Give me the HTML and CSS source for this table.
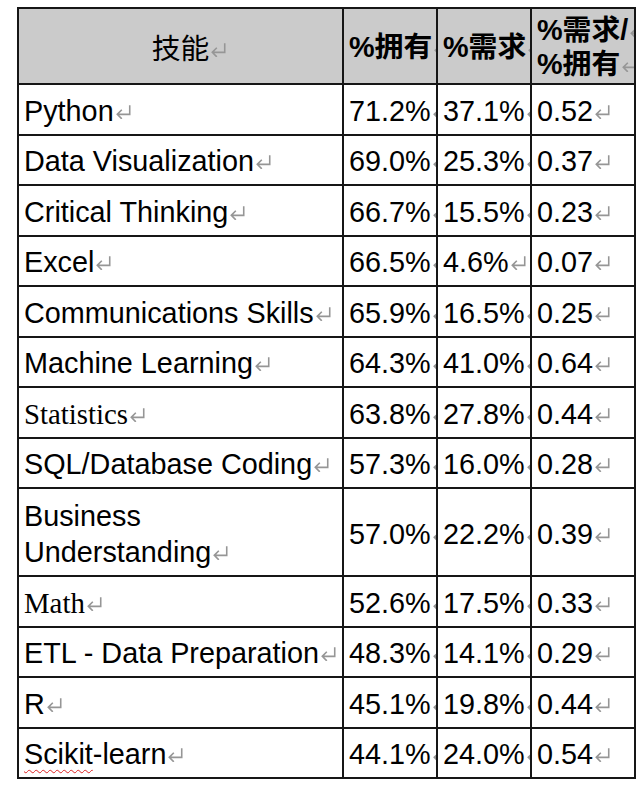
FILE: index.html
```html
<!DOCTYPE html>
<html lang="zh">
<head>
<meta charset="utf-8">
<title>技能表</title>
<link rel="stylesheet" href="styles.css">
</head>
<body>
<svg class="defs" width="0" height="0" aria-hidden="true">
  <symbol id="pm" viewBox="0 0 15 13">
    <path d="M13 1V9H2M6 5L2 9L6 13" fill="none" stroke="currentColor" stroke-width="1.4"/>
  </symbol>
</svg>
<table class="grid">
  <colgroup><col class="c1"><col class="c2"><col class="c3"><col class="c4"><col class="c5"></colgroup>
  <thead>
    <tr>
      <th class="first k">技能<svg class="pm pm-c"><use href="#pm"/></svg></th>
      <th>%拥有<svg class="pm"><use href="#pm"/></svg></th>
      <th>%需求<svg class="pm"><use href="#pm"/></svg></th>
      <th>%需求/<svg class="pm"><use href="#pm"/></svg><br>%拥有<svg class="pm"><use href="#pm"/></svg></th>
      <td class="end"><svg class="pm"><use href="#pm"/></svg><br><svg class="pm"><use href="#pm"/></svg></td>
    </tr>
  </thead>
  <tbody>
    <tr><td class="first">Python<svg class="pm"><use href="#pm"/></svg></td><td>71.2%<svg class="pm"><use href="#pm"/></svg></td><td>37.1%<svg class="pm"><use href="#pm"/></svg></td><td>0.52<svg class="pm"><use href="#pm"/></svg></td><td class="end"><svg class="pm"><use href="#pm"/></svg></td></tr>
    <tr><td class="first">Data Visualization<svg class="pm"><use href="#pm"/></svg></td><td>69.0%<svg class="pm"><use href="#pm"/></svg></td><td>25.3%<svg class="pm"><use href="#pm"/></svg></td><td>0.37<svg class="pm"><use href="#pm"/></svg></td><td class="end"><svg class="pm"><use href="#pm"/></svg></td></tr>
    <tr><td class="first">Critical Thinking<svg class="pm"><use href="#pm"/></svg></td><td>66.7%<svg class="pm"><use href="#pm"/></svg></td><td>15.5%<svg class="pm"><use href="#pm"/></svg></td><td>0.23<svg class="pm"><use href="#pm"/></svg></td><td class="end"><svg class="pm"><use href="#pm"/></svg></td></tr>
    <tr><td class="first">Excel<svg class="pm"><use href="#pm"/></svg></td><td>66.5%<svg class="pm"><use href="#pm"/></svg></td><td>4.6%<svg class="pm"><use href="#pm"/></svg></td><td>0.07<svg class="pm"><use href="#pm"/></svg></td><td class="end"><svg class="pm"><use href="#pm"/></svg></td></tr>
    <tr><td class="first">Communications Skills<svg class="pm"><use href="#pm"/></svg></td><td>65.9%<svg class="pm"><use href="#pm"/></svg></td><td>16.5%<svg class="pm"><use href="#pm"/></svg></td><td>0.25<svg class="pm"><use href="#pm"/></svg></td><td class="end"><svg class="pm"><use href="#pm"/></svg></td></tr>
    <tr><td class="first">Machine Learning<svg class="pm"><use href="#pm"/></svg></td><td>64.3%<svg class="pm"><use href="#pm"/></svg></td><td>41.0%<svg class="pm"><use href="#pm"/></svg></td><td>0.64<svg class="pm"><use href="#pm"/></svg></td><td class="end"><svg class="pm"><use href="#pm"/></svg></td></tr>
    <tr><td class="first serif">Statistics<svg class="pm"><use href="#pm"/></svg></td><td>63.8%<svg class="pm"><use href="#pm"/></svg></td><td>27.8%<svg class="pm"><use href="#pm"/></svg></td><td>0.44<svg class="pm"><use href="#pm"/></svg></td><td class="end"><svg class="pm"><use href="#pm"/></svg></td></tr>
    <tr><td class="first">SQL/Database Coding<svg class="pm"><use href="#pm"/></svg></td><td>57.3%<svg class="pm"><use href="#pm"/></svg></td><td>16.0%<svg class="pm"><use href="#pm"/></svg></td><td>0.28<svg class="pm"><use href="#pm"/></svg></td><td class="end"><svg class="pm"><use href="#pm"/></svg></td></tr>
    <tr class="tall"><td class="first">Business<br>Understanding<svg class="pm"><use href="#pm"/></svg></td><td>57.0%<svg class="pm"><use href="#pm"/></svg></td><td>22.2%<svg class="pm"><use href="#pm"/></svg></td><td>0.39<svg class="pm"><use href="#pm"/></svg></td><td class="end"><svg class="pm"><use href="#pm"/></svg></td></tr>
    <tr><td class="first serif">Math<svg class="pm"><use href="#pm"/></svg></td><td>52.6%<svg class="pm"><use href="#pm"/></svg></td><td>17.5%<svg class="pm"><use href="#pm"/></svg></td><td>0.33<svg class="pm"><use href="#pm"/></svg></td><td class="end"><svg class="pm"><use href="#pm"/></svg></td></tr>
    <tr><td class="first">ETL - Data Preparation<svg class="pm"><use href="#pm"/></svg></td><td>48.3%<svg class="pm"><use href="#pm"/></svg></td><td>14.1%<svg class="pm"><use href="#pm"/></svg></td><td>0.29<svg class="pm"><use href="#pm"/></svg></td><td class="end"><svg class="pm"><use href="#pm"/></svg></td></tr>
    <tr><td class="first">R<svg class="pm"><use href="#pm"/></svg></td><td>45.1%<svg class="pm"><use href="#pm"/></svg></td><td>19.8%<svg class="pm"><use href="#pm"/></svg></td><td>0.44<svg class="pm"><use href="#pm"/></svg></td><td class="end"><svg class="pm"><use href="#pm"/></svg></td></tr>
    <tr><td class="first"><span class="spell">Scikit</span>-learn<svg class="pm"><use href="#pm"/></svg></td><td>44.1%<svg class="pm"><use href="#pm"/></svg></td><td>24.0%<svg class="pm"><use href="#pm"/></svg></td><td>0.54<svg class="pm"><use href="#pm"/></svg></td><td class="end"><svg class="pm"><use href="#pm"/></svg></td></tr>
  </tbody>
</table>
</body>
</html>
```
FILE: styles.css
```css
* { box-sizing: border-box; }
html, body { margin: 0; padding: 0; overflow: hidden; background: #fff; }
body {
  font-family: "Liberation Sans", Arial, sans-serif;
  color: #000;
  width: 640px;
  height: 792px;
}
.defs { position: absolute; width: 0; height: 0; }

.grid {
  border-collapse: separate;
  border-spacing: 0;
  table-layout: fixed;
  width: 639px;
  margin: 7px 0 0 17px;
  font-size: 28.8px;
  line-height: 36px;
}
.c1 { width: 327px; }
.c2 { width: 94px; }
.c3 { width: 94px; }
.c4 { width: 104px; }
.c5 { width: 20px; }

.grid td, .grid th {
  border-right: 2px solid #161616;
  border-bottom: 2px solid #161616;
  padding: 3px 0 0 5px;
  vertical-align: middle;
  overflow: hidden;
  white-space: nowrap;
  text-align: left;
  font-weight: normal;
  height: 50.5px;
}
.grid .first { border-left: 2px solid #161616; }

.grid th {
  border-top: 2px solid #161616;
  background: #cbcbcb;
  height: 78px;
  font-family: "Liberation Sans", "Noto Sans CJK SC", sans-serif;
  font-weight: bold;
  line-height: 34px;
  padding-top: 2px;
}
.grid th.k {
  text-align: center;
  font-weight: normal;
  font-family: "Noto Sans CJK SC", sans-serif;
  padding-left: 0;
}
.grid .tall td { height: 88px; }
.grid td.end, .grid th.end {
  border: none;
  background: transparent;
  padding-left: 3px;
  line-height: 34px;
}
.serif { font-family: "Liberation Serif", "Times New Roman", serif; }
.spell {
  text-decoration: underline wavy #d22;
  text-decoration-thickness: 1px;
  text-underline-offset: 5px;
}

.pm {
  width: 17px;
  height: 15px;
  color: #969696;
  vertical-align: 2px;
  margin-left: 1px;
}
.pm-c { margin-right: -18px; }
```
